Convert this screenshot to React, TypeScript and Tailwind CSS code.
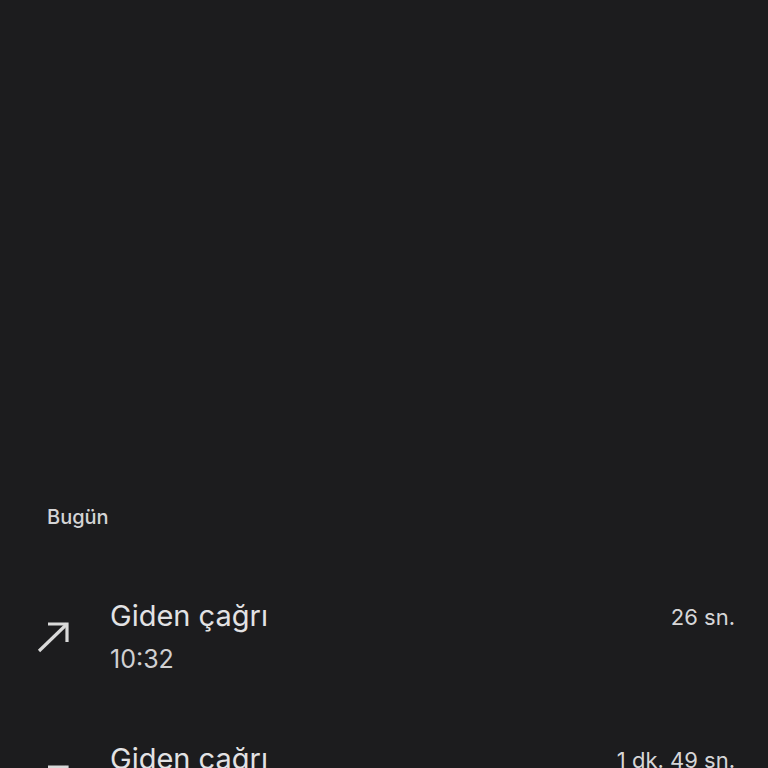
import React from "react";

interface CallRow {
  label: string;
  time: string;
  duration: string;
}

const calls: CallRow[] = [
  { label: "Giden çağrı", time: "10:32", duration: "26 sn." },
  { label: "Giden çağrı", time: "10:05", duration: "1 dk. 49 sn." },
];

const OutgoingArrow = () => (
  <svg width="34" height="34" viewBox="0 0 34 34" fill="none">
    <path d="M2 31 L30 4" stroke="#d9d9d9" strokeWidth="3.2" />
    <path d="M11 4 H30 V22" stroke="#d9d9d9" strokeWidth="3.2" />
  </svg>
);

const App = () => {
  return (
    <div
      className="h-screen w-full overflow-hidden bg-[#1c1c1e] text-[#e3e3e3]"
      style={{ fontFamily: "Inter, Roboto, 'Noto Sans', sans-serif" }}
    >
      <div className="pt-[503px]">
        <p className="pl-[47px] text-[20px] font-medium leading-[28px] text-[#d4d4d6]">Bugün</p>

        <div className="mt-[65px] flex flex-col gap-[64px]">
          {calls.map((c, i) => (
            <div key={i} className="flex items-start pl-[37px] pr-[33px]">
              <div className="mt-[24px] w-[34px] shrink-0">
                <OutgoingArrow />
              </div>
              <div className="ml-[39px] flex-1">
                <p className="text-[29px] leading-[40px] text-[#e2e2e4]">{c.label}</p>
                <p className="mt-[7px] text-[25px] leading-[32px] text-[#d0d0d2]">{c.time}</p>
              </div>
              <p className="mt-[6px] text-[22px] leading-[30px] text-[#d6d6d8]">{c.duration}</p>
            </div>
          ))}
        </div>
      </div>
    </div>
  );
};

export default App;
